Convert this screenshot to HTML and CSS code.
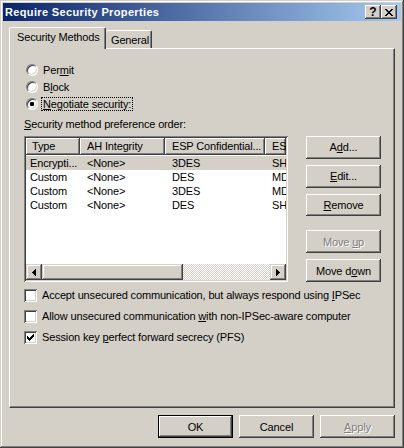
FILE: index.html
```html
<!DOCTYPE html>
<html lang="en">
<head>
    <meta charset="UTF-8">
    <title>Require Security Properties</title>
    <link rel="stylesheet" href="styles.css">
</head>
<body>
    <div class="window">
        <div class="titlebar">
            <span class="title">Require Security Properties</span>
            <div class="caption-buttons">
                <span class="cap-btn">?</span>
                <span class="cap-btn">
                    <svg width="8" height="7" viewBox="0 0 8 7" shape-rendering="crispEdges">
                        <path d="M0 0h2v1h-2zM6 0h2v1h-2zM1 1h2v1h-2zM5 1h2v1h-2zM2 2h4v1h-4zM3 3h2v1h-2zM2 4h4v1h-4zM1 5h2v1h-2zM5 5h2v1h-2zM0 6h2v1h-2zM6 6h2v1h-2z" fill="#000"/>
                    </svg>
                </span>
            </div>
        </div>

        <div class="dialog">
            <div class="tabs">
                <div class="tab active">Security Methods</div>
                <div class="tab">General</div>
            </div>

            <div class="panel">
                <div class="radios">
                    <div class="radio-row"><span class="radio"></span><span>Per<u>m</u>it</span></div>
                    <div class="radio-row"><span class="radio"></span><span>B<u>l</u>ock</span></div>
                    <div class="radio-row"><span class="radio checked"></span><span class="focus"><u>N</u>egotiate security:</span></div>
                </div>

                <div class="list-label"><u>S</u>ecurity method preference order:</div>

                <div class="list-row">
                    <div class="listview">
                        <div class="lv-header">
                            <div class="lv-col col-type">Type</div>
                            <div class="lv-col col-ah">AH Integrity</div>
                            <div class="lv-col col-esp">ESP Confidential...</div>
                            <div class="lv-col col-esi">ES</div>
                        </div>
                        <div class="lv-body">
                            <div class="lv-row selected">
                                <div class="lv-cell col-type">Encrypti...</div>
                                <div class="lv-cell col-ah">&lt;None&gt;</div>
                                <div class="lv-cell col-esp">3DES</div>
                                <div class="lv-cell col-esi">SH</div>
                            </div>
                            <div class="lv-row">
                                <div class="lv-cell col-type">Custom</div>
                                <div class="lv-cell col-ah">&lt;None&gt;</div>
                                <div class="lv-cell col-esp">DES</div>
                                <div class="lv-cell col-esi">MD</div>
                            </div>
                            <div class="lv-row">
                                <div class="lv-cell col-type">Custom</div>
                                <div class="lv-cell col-ah">&lt;None&gt;</div>
                                <div class="lv-cell col-esp">3DES</div>
                                <div class="lv-cell col-esi">MD</div>
                            </div>
                            <div class="lv-row">
                                <div class="lv-cell col-type">Custom</div>
                                <div class="lv-cell col-ah">&lt;None&gt;</div>
                                <div class="lv-cell col-esp">DES</div>
                                <div class="lv-cell col-esi">SH</div>
                            </div>
                        </div>
                        <div class="hscroll">
                            <span class="sb-btn">
                                <svg width="4" height="7" viewBox="0 0 4 7" shape-rendering="crispEdges"><path d="M3 0h1v7h-1zM2 1h1v5h-1zM1 2h1v3h-1zM0 3h1v1h-1z" fill="#000"/></svg>
                            </span>
                            <span class="sb-thumb"></span>
                            <span class="sb-track"></span>
                            <span class="sb-btn">
                                <svg width="4" height="7" viewBox="0 0 4 7" shape-rendering="crispEdges"><path d="M0 0h1v7h-1zM1 1h1v5h-1zM2 2h1v3h-1zM3 3h1v1h-1z" fill="#000"/></svg>
                            </span>
                        </div>
                    </div>

                    <div class="side-buttons">
                        <button class="btn">A<u>d</u>d...</button>
                        <button class="btn"><u>E</u>dit...</button>
                        <button class="btn"><u>R</u>emove</button>
                        <button class="btn disabled spaced">Move <u>u</u>p</button>
                        <button class="btn">Move d<u>o</u>wn</button>
                    </div>
                </div>

                <div class="checks">
                    <div class="check-row"><span class="checkbox"></span><span>Accept unsecured communication, but always respond using <u>I</u>PSec</span></div>
                    <div class="check-row"><span class="checkbox"></span><span>Allow unsecured communication <u>w</u>ith non-IPSec-aware computer</span></div>
                    <div class="check-row">
                        <span class="checkbox">
                            <svg width="7" height="7" viewBox="0 0 7 7" shape-rendering="crispEdges"><path d="M6 0h1v3h-1zM5 1h1v3h-1zM4 2h1v3h-1zM0 2h1v3h-1zM1 3h1v3h-1zM3 3h1v3h-1zM2 4h1v3h-1z" fill="#000"/></svg>
                        </span>
                        <span>Session key <u>p</u>erfect forward secrecy (PFS)</span>
                    </div>
                </div>
            </div>

            <div class="footer">
                <button class="btn default">OK</button>
                <button class="btn">Cancel</button>
                <button class="btn disabled"><u>A</u>pply</button>
            </div>
        </div>
    </div>
</body>
</html>
```

FILE: styles.css
```css
* {
    box-sizing: border-box;
}
body {
    margin: 0;
    font-family: "Liberation Sans", Arial, sans-serif;
    font-size: 11px;
    letter-spacing: -0.15px;
    color: #000;
    background-color: #d4d0c8;
}
.window {
    width: 404px;
    height: 448px;
    padding: 3px;
    display: flex;
    flex-direction: column;
    background-color: #d4d0c8;
    box-shadow: inset -1px -1px #404040, inset 1px 1px #d4d0c8, inset -2px -2px #808080, inset 2px 2px #fff;
}
.titlebar {
    height: 18px;
    flex: none;
    display: flex;
    align-items: center;
    justify-content: space-between;
    padding: 0 4px 0 2px;
    background: linear-gradient(90deg, #0a246a, #a6caf0);
    color: white;
    font-weight: bold;
}
.title {
    letter-spacing: 0.35px;
}
.caption-buttons {
    display: flex;
}
.cap-btn {
    width: 16px;
    height: 14px;
    display: flex;
    align-items: center;
    justify-content: center;
    background-color: #d4d0c8;
    color: #000;
    font-size: 12px;
    letter-spacing: 0;
    box-shadow: inset -1px -1px #404040, inset 1px 1px #fff, inset -2px -2px #808080;
}

.dialog {
    flex: 1;
    display: flex;
    flex-direction: column;
    padding: 6px 6px 0 6px;
}
.tabs {
    height: 21px;
    display: flex;
    align-items: flex-end;
}
.tab {
    height: 18px;
    width: 46px;
    padding: 3px 0 0 5px;
    background-color: #d4d0c8;
    border-top: 1px solid #fff;
    border-right: 1px solid #404040;
    border-radius: 2px 2px 0 0;
    box-shadow: inset -1px 0 #808080;
}
.tab.active {
    position: relative;
    z-index: 1;
    width: 97px;
    height: 22px;
    margin-bottom: -1px;
    padding: 3px 0 0 7px;
    border-left: 1px solid #fff;
}
.panel {
    height: 360px;
    flex: none;
    padding: 13px 0 0 14px;
    border: 1px solid;
    border-color: #fff #404040 #404040 #fff;
    box-shadow: inset -1px -1px #808080;
}

.radios {
    display: flex;
    flex-direction: column;
    gap: 1px;
}
.radio-row {
    height: 16px;
    display: flex;
    align-items: center;
    gap: 5px;
    padding-left: 2px;
}
.radio {
    width: 12px;
    height: 12px;
    border-radius: 50%;
    background-color: #fff;
    border: 1px solid;
    border-color: #808080 #fff #fff #808080;
    box-shadow: inset 1px 1px #404040, inset -1px -1px #d4d0c8;
    display: flex;
    align-items: center;
    justify-content: center;
}
.radio.checked::after {
    content: "";
    width: 4px;
    height: 4px;
    border-radius: 1px;
    background-color: #000;
}
.focus {
    margin-left: -2px;
    padding: 0 1px;
    border: 1px dotted #000;
    line-height: 12px;
}

.list-label {
    margin: 6px 0 5px;
    line-height: 13px;
}
.list-row {
    height: 146px;
    display: flex;
    gap: 18px;
}
.listview {
    width: 264px;
    height: 146px;
    padding: 2px;
    display: flex;
    flex-direction: column;
    overflow: hidden;
    background-color: #fff;
    box-shadow: inset 1px 1px #808080, inset -1px -1px #fff, inset 2px 2px #404040, inset -2px -2px #d4d0c8;
}
.lv-header {
    height: 17px;
    flex: none;
    display: flex;
}
.lv-col {
    flex: none;
    line-height: 17px;
    padding-left: 7px;
    white-space: nowrap;
    overflow: hidden;
    background-color: #d4d0c8;
    box-shadow: inset -1px -1px #404040, inset 1px 1px #fff, inset -2px -2px #808080;
}
.lv-col.col-type {
    padding-left: 6px;
}
.col-type { width: 54px; }
.col-ah { width: 85px; }
.col-esp { width: 100px; }
.col-esi { width: 21px; }
.lv-body {
    flex: 1;
    padding-top: 1px;
    overflow: hidden;
}
.lv-row {
    height: 14px;
    display: flex;
    line-height: 14px;
    white-space: nowrap;
}
.lv-row.selected {
    background-color: #d4d0c8;
}
.lv-cell {
    flex: none;
    padding-left: 7px;
    overflow: hidden;
}
.lv-cell.col-type {
    padding-left: 4px;
}
.hscroll {
    height: 16px;
    flex: none;
    display: flex;
}
.sb-btn,
.sb-thumb {
    flex: none;
    display: flex;
    align-items: center;
    justify-content: center;
    background-color: #d4d0c8;
    box-shadow: inset -1px -1px #404040, inset 1px 1px #d4d0c8, inset -2px -2px #808080, inset 2px 2px #fff;
}
.sb-btn {
    width: 16px;
}
.sb-thumb {
    width: 141px;
}
.sb-track {
    flex: 1;
    background: repeating-conic-gradient(#fff 0 25%, #d4d0c8 0 50%) 0 0 / 2px 2px;
}

.side-buttons {
    display: flex;
    flex-direction: column;
    gap: 6px;
}
.btn {
    width: 75px;
    height: 23px;
    padding: 0;
    border: none;
    font: inherit;
    letter-spacing: inherit;
    color: #000;
    background-color: #d4d0c8;
    box-shadow: inset -1px -1px #404040, inset 1px 1px #fff, inset -2px -2px #808080, inset 2px 2px #d4d0c8;
}
.btn.spaced {
    margin-top: 8px;
}
.btn.disabled {
    color: #808080;
    text-shadow: 1px 1px #fff;
}
.btn.default {
    box-shadow: inset 0 0 0 1px #000, inset -2px -2px #404040, inset 2px 2px #fff, inset -3px -3px #808080;
}

.checks {
    margin-top: 7px;
    display: flex;
    flex-direction: column;
    gap: 8px;
}
.check-row {
    height: 13px;
    display: flex;
    align-items: center;
    gap: 5px;
    line-height: 13px;
}
.checkbox {
    width: 13px;
    height: 13px;
    flex: none;
    display: flex;
    align-items: center;
    justify-content: center;
    background-color: #fff;
    box-shadow: inset 1px 1px #808080, inset -1px -1px #fff, inset 2px 2px #404040, inset -2px -2px #d4d0c8;
}

.footer {
    margin-top: 7px;
    display: flex;
    justify-content: flex-end;
    gap: 6px;
}
```
